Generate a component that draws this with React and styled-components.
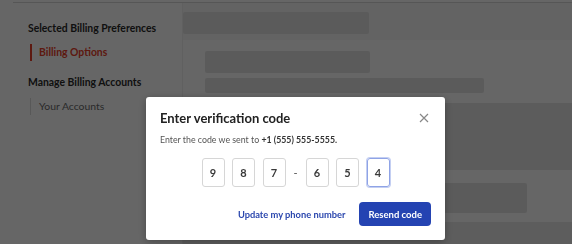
import React from 'react';
import styled, { createGlobalStyle } from 'styled-components';

const GlobalStyle = createGlobalStyle`
  html, body {
    margin: 0;
    padding: 0;
    background: #fff;
    font-family: "Lato", "Open Sans", sans-serif;
  }
`;

const Page = styled.div`
  width: 572px;
  height: 244px;
  overflow: hidden;
  position: relative;
  background: #fff;
`;

const TopRule = styled.div`
  margin: 2px 0 0 13px;
  height: 1px;
  background: #d8d8d8;
`;

const Layout = styled.div`
  display: grid;
  grid-template-columns: 182px 1fr;
`;

const Sidebar = styled.nav`
  padding: 17px 0 0 28px;
  display: flex;
  flex-direction: column;
`;

const NavHeading = styled.h4`
  margin: 0 0 8px;
  font-size: 10.4px;
  font-weight: 700;
  color: #2a2a2a;
  line-height: 16px;
`;

const NavItem = styled.a`
  display: block;
  margin: 0 0 0 2px;
  height: 17px;
  line-height: 17px;
  font-size: 10.4px;
  font-weight: ${p => (p.$active ? 700 : 400)};
  color: ${p => (p.$active ? '#e8402a' : '#6a6a6a')};
  border-left: ${p => (p.$active ? '2px solid #e8402a' : '1px solid #dcdcdc')};
  padding-left: ${p => (p.$active ? '7px' : '8px')};
  margin-bottom: ${p => (p.$active ? '13px' : '0')};
  text-decoration: none;
`;

const Main = styled.main`
  display: flex;
  flex-direction: column;
  border-left: 1px solid #f0f0f0;
`;

const Header = styled.div`
  padding: 9px 0 6px;
  background: #f8f8f8;
`;

const Skeleton = styled.div`
  width: ${p => p.$w}px;
  height: ${p => p.$h}px;
  background: #e4e4e4;
  border-radius: 2px;
`;

const Section = styled.section`
  padding: ${p => p.$pad};
  display: flex;
  flex-direction: column;
  gap: 5px;
  background: #fff;
`;

const Band = styled.div`
  height: ${p => p.$h}px;
  background: ${p => p.$bg};
`;

const Overlay = styled.div`
  position: fixed;
  inset: 0;
  background: rgba(0, 0, 0, 0.6);
  padding: 97px 0 0 146px;
`;

const Modal = styled.div`
  width: 299px;
  height: 143px;
  box-sizing: border-box;
  background: #fff;
  border-radius: 3px;
  box-shadow: 0 2px 8px rgba(0, 0, 0, 0.3);
  padding: 10px 14px 0;
  display: flex;
  flex-direction: column;
`;

const ModalHead = styled.div`
  display: flex;
  justify-content: space-between;
  align-items: center;
  height: 22px;
`;

const Title = styled.h2`
  margin: 0;
  font-size: 13px;
  font-weight: 700;
  color: #222;
`;

const Close = styled.button`
  border: none;
  background: none;
  padding: 0;
  margin-right: 1px;
  color: #888;
  display: flex;
  cursor: pointer;
`;

const Hint = styled.p`
  margin: 4px 0 0;
  font-size: 8.8px;
  line-height: 13px;
  color: #555;
  b {
    color: #333;
    font-weight: 700;
  }
`;

const CodeRow = styled.div`
  display: flex;
  justify-content: center;
  align-items: center;
  gap: 7.5px;
  margin-top: 12px;
`;

const Digit = styled.div`
  width: 23px;
  height: 29px;
  box-sizing: border-box;
  border: 1px solid ${p => (p.$focus ? '#8fa3e6' : '#d6d6d6')};
  box-shadow: ${p => (p.$focus ? '0 0 0 1px #c4cff2' : 'none')};
  border-radius: 3px;
  display: flex;
  align-items: center;
  justify-content: center;
  font-size: 11px;
  font-weight: 700;
  color: #3a3a3a;
`;

const Dash = styled.span`
  width: 5px;
  text-align: center;
  font-size: 11px;
  color: #555;
`;

const Footer = styled.div`
  display: flex;
  justify-content: flex-end;
  align-items: center;
  gap: 14px;
  margin-top: 15px;
`;

const LinkButton = styled.a`
  font-size: 9.3px;
  font-weight: 700;
  color: #2b47ae;
  text-decoration: none;
`;

const Primary = styled.button`
  height: 24px;
  padding: 0 9px;
  border: none;
  border-radius: 4px;
  background: #2443b2;
  color: #fff;
  font-family: inherit;
  font-size: 9.5px;
  font-weight: 700;
`;

export default function App() {
  const code = ['9', '8', '7', '6', '5', '4'];
  return (
    <>
      <GlobalStyle />
      <Page>
        <TopRule />
        <Layout>
          <Sidebar>
            <NavHeading>Selected Billing Preferences</NavHeading>
            <NavItem $active>Billing Options</NavItem>
            <NavHeading>Manage Billing Accounts</NavHeading>
            <NavItem>Your Accounts</NavItem>
          </Sidebar>
          <Main>
            <Header>
              <Skeleton $w={186} $h={22} />
            </Header>
            <Section $pad="11px 0 10px 22px">
              <Skeleton $w={165} $h={22} />
              <Skeleton $w={279} $h={15} />
            </Section>
            <Band $h={67} $bg="#e6e6e6" />
            <Section $pad="13px 0 9px 22px">
              <Skeleton $w={322} $h={30} />
            </Section>
            <Band $h={30} $bg="#e9e9e9" />
          </Main>
        </Layout>
        <Overlay>
          <Modal role="dialog">
            <ModalHead>
              <Title>Enter verification code</Title>
              <Close aria-label="Close">
                <svg width="12" height="12" viewBox="0 0 12 12" fill="none" stroke="currentColor" strokeWidth="1.2">
                  <path d="M2 2l8 8M10 2l-8 8" />
                </svg>
              </Close>
            </ModalHead>
            <Hint>
              Enter the code we sent to <b>+1 (555) 555-5555.</b>
            </Hint>
            <CodeRow>
              {code.slice(0, 3).map((d, i) => (
                <Digit key={i}>{d}</Digit>
              ))}
              <Dash>-</Dash>
              {code.slice(3).map((d, i) => (
                <Digit key={i} $focus={i === 2}>{d}</Digit>
              ))}
            </CodeRow>
            <Footer>
              <LinkButton href="#">Update my phone number</LinkButton>
              <Primary>Resend code</Primary>
            </Footer>
          </Modal>
        </Overlay>
      </Page>
    </>
  );
}
